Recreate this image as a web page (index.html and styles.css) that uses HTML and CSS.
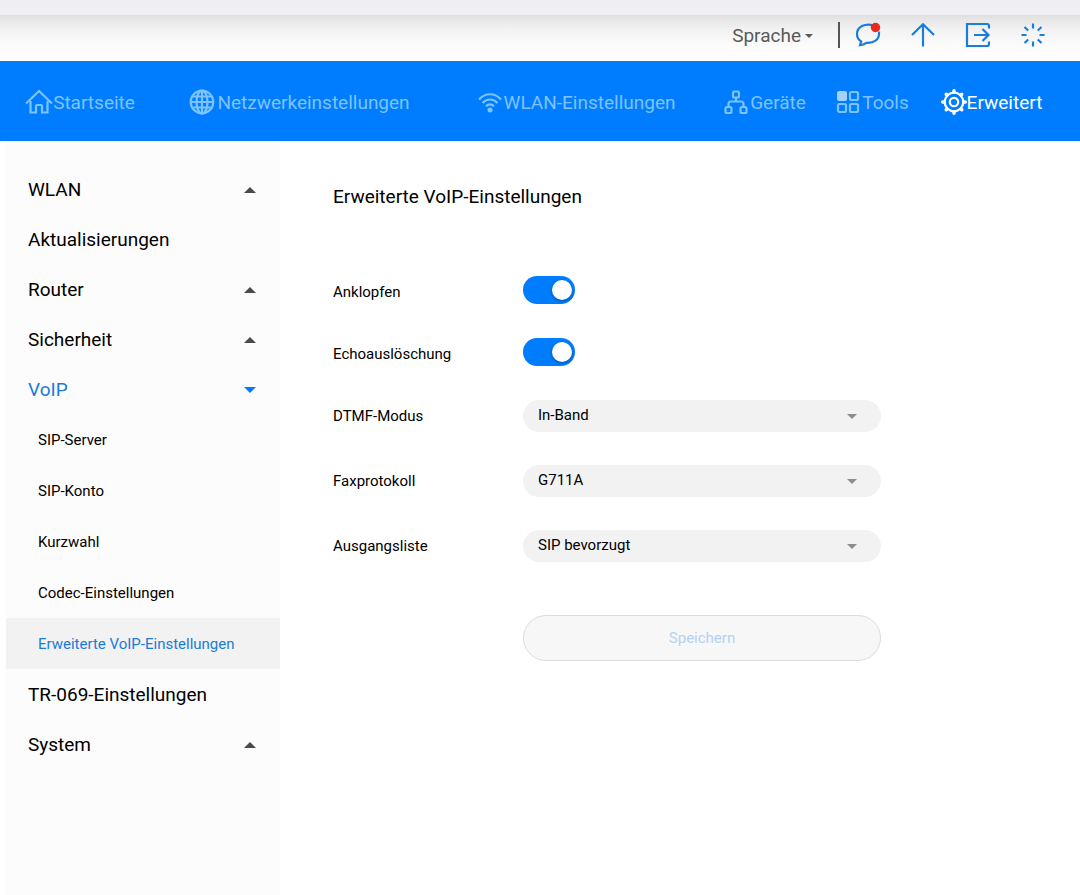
FILE: index.html
```html
<!DOCTYPE html>
<html lang="de">
<head>
    <meta charset="UTF-8">
    <meta name="viewport" content="width=device-width, initial-scale=1.0">
    <title>Erweiterte VoIP-Einstellungen</title>
    <link rel="stylesheet" href="styles.css">
</head>
<body>

    <div class="top-strip"></div>

    <header class="header">
        <button type="button" class="language">Sprache <span class="language-arrow"></span></button>
        <span class="divider"></span>
        <div class="header-icons">
            <a href="#" aria-label="Nachrichten">
                <svg width="26" height="26" viewBox="0 0 26 26">
                    <path d="M18 3.200C10 1 2 4.800 2 12c0 3.500 1.800 6 4.200 7.500L5 23.200c3-.300 4.800-1.200 6.200-2.400C19 21.500 24 17.500 24 12V9.500"/>
                    <circle class="dot" cx="20.500" cy="5.500" r="4.700"/>
                </svg>
            </a>
            <a href="#" aria-label="Update">
                <svg width="26" height="26" viewBox="0 0 26 26">
                    <path d="M13 24.500V2.500M2 13L13 2.300 24 13"/>
                </svg>
            </a>
            <a href="#" aria-label="Abmelden">
                <svg width="26" height="26" viewBox="0 0 26 26">
                    <path d="M24 6.500V4q0-2-2-2H2v22h20q2 0 2-2v-2.500M9 13h14M17.500 7l6 6-6 6"/>
                </svg>
            </a>
            <a href="#" aria-label="Assistent">
                <svg width="26" height="26" viewBox="0 0 26 26">
                    <path d="M13 1.500v5M13 19.500v5M1.500 13h5M19.500 13h5M4.500 5l3.700 3.500M17.800 17.500l3.700 3.500M4.500 21l3.700-3.500M17.800 8.500L21.500 5"/>
                </svg>
            </a>
        </div>
    </header>

    <nav class="main-nav">
        <a href="#">
            <svg width="28" height="26" viewBox="0 0 28 26">
                <path d="M1 14.500L14 2l13 12.500M5.500 12v11.500h5.500V17q0-1 1-1h4q1 0 1 1v6.500h5.500V12"/>
            </svg>Startseite
        </a>
        <a href="#">
            <svg class="wide" width="26" height="26" viewBox="0 0 26 26">
                <circle cx="13" cy="13" r="11.300"/>
                <ellipse cx="13" cy="13" rx="5.500" ry="11.300"/>
                <path d="M13 2v22M2 13h22M4 7.500h18M4 18.500h18"/>
            </svg>Netzwerkeinstellungen
        </a>
        <a href="#">
            <svg class="wide" width="24" height="26" viewBox="0 0 24 26">
                <path d="M1 10.500c6-7 16-7 22 0M4.500 14c4.300-4.700 10.700-4.700 15 0M8 17.300c2.400-2.500 5.600-2.500 8 0"/>
                <circle class="fill" cx="12" cy="21" r="2.500"/>
            </svg>WLAN-Einstellungen
        </a>
        <a href="#">
            <svg class="wide" width="24" height="26" viewBox="0 0 24 26">
                <rect x="9" y="2.500" width="6" height="6" rx="1.500"/>
                <rect x="1.500" y="18" width="6" height="6" rx="1.500"/>
                <rect x="16.500" y="18" width="6" height="6" rx="1.500"/>
                <path d="M12 8.500v4M4.500 18v-3q0-2.500 2.500-2.500h10q2.500 0 2.500 2.500v3"/>
            </svg>Geräte
        </a>
        <a href="#">
            <svg class="wide" width="24" height="26" viewBox="0 0 24 26">
                <rect class="fill bright" x="1" y="2" width="10" height="10" rx="2"/>
                <rect x="14" y="3" width="8" height="8" rx="1.500"/>
                <rect x="2" y="15" width="8" height="8" rx="1.500"/>
                <rect x="14" y="15" width="8" height="8" rx="1.500"/>
            </svg>Tools
        </a>
        <a href="#" class="active">
            <svg width="26" height="26" viewBox="0 0 26 26">
                <circle cx="13" cy="13" r="9.300"/>
                <circle cx="13" cy="13" r="4.200"/>
                <path class="teeth" d="M13 3V1.700M13 23v1.300M3 13H1.700M23 13h1.300M6 6l-.800-.800M20 6l.800-.800M6 20l-.800.800M20 20l.800.800"/>
            </svg>Erweitert
        </a>
    </nav>

    <div class="page">
        <aside class="sidebar">
            <ul class="menu">
                <li><a href="#">WLAN <span class="arrow-up"></span></a></li>
                <li><a href="#">Aktualisierungen</a></li>
                <li><a href="#">Router <span class="arrow-up"></span></a></li>
                <li><a href="#">Sicherheit <span class="arrow-up"></span></a></li>
                <li>
                    <a href="#" class="open">VoIP <span class="arrow-down"></span></a>
                    <ul class="submenu">
                        <li><a href="#">SIP-Server</a></li>
                        <li><a href="#">SIP-Konto</a></li>
                        <li><a href="#">Kurzwahl</a></li>
                        <li><a href="#">Codec-Einstellungen</a></li>
                        <li><a href="#" class="selected">Erweiterte VoIP-Einstellungen</a></li>
                    </ul>
                </li>
                <li><a href="#">TR-069-Einstellungen</a></li>
                <li><a href="#">System <span class="arrow-up"></span></a></li>
            </ul>
        </aside>

        <main class="content">
            <h1>Erweiterte VoIP-Einstellungen</h1>
            <form>
                <div class="row">
                    <label for="anklopfen">Anklopfen</label>
                    <input type="checkbox" class="switch" id="anklopfen" checked>
                </div>
                <div class="row">
                    <label for="echo">Echoauslöschung</label>
                    <input type="checkbox" class="switch" id="echo" checked>
                </div>
                <div class="row select-row">
                    <label for="dtmf">DTMF-Modus</label>
                    <div class="select-box">
                        <select id="dtmf"><option>In-Band</option></select>
                    </div>
                </div>
                <div class="row select-row">
                    <label for="fax">Faxprotokoll</label>
                    <div class="select-box">
                        <select id="fax"><option>G711A</option></select>
                    </div>
                </div>
                <div class="row select-row">
                    <label for="ausgang">Ausgangsliste</label>
                    <div class="select-box">
                        <select id="ausgang"><option>SIP bevorzugt</option></select>
                    </div>
                </div>
                <div class="row save-row">
                    <button type="submit" class="save" disabled>Speichern</button>
                </div>
            </form>
        </main>
    </div>

</body>
</html>
```
FILE: styles.css
```css
* {
    box-sizing: border-box;
}

body {
    margin: 0;
    min-height: 100vh;
    display: flex;
    flex-direction: column;
    font-family: Roboto, Arial, sans-serif;
    font-size: 15px;
    color: #000;
    background-color: #fff;
}

a {
    color: inherit;
    text-decoration: none;
}

ul {
    list-style: none;
    margin: 0;
    padding: 0;
}

svg {
    display: block;
    flex: none;
    fill: none;
    stroke: currentColor;
    stroke-width: 2.2;
}

.top-strip {
    height: 15px;
    background-color: #eeeef3;
}

/* Header */
.header {
    height: 46px;
    padding: 0 34px 6px 0;
    display: flex;
    align-items: center;
    justify-content: flex-end;
    background-image: linear-gradient(#e0e0e0, #f2f2f2 30%, #fdfdfd 75%);
}

.language {
    display: flex;
    align-items: center;
    gap: 4px;
    padding: 0;
    border: none;
    background: none;
    font-family: inherit;
    font-size: 19px;
    color: #5a5a5a;
    cursor: pointer;
}

.language-arrow {
    margin-top: 2px;
    border: 4px solid transparent;
    border-top-color: #5a5a5a;
    border-bottom: none;
}

.divider {
    width: 2px;
    height: 26px;
    margin: 0 15px 0 25px;
    background-color: #555;
}

.header-icons {
    display: flex;
    gap: 29px;
    color: #1b7ddb;
}

.header-icons .dot {
    fill: #e8291c;
    stroke: none;
}

/* Main navigation */
.main-nav {
    height: 80px;
    padding: 0 26px 0 0;
    display: grid;
    grid-template-columns: 160fr 279fr 275fr 102fr 113fr 125fr;
    background-color: #007dff;
    font-size: 19px;
    color: #7cc3ff;
}

.main-nav a {
    display: flex;
    align-items: center;
    justify-content: center;
    padding-top: 2px;
    white-space: nowrap;
}

.main-nav .wide {
    margin-right: 2px;
}

.main-nav .fill {
    fill: currentColor;
    stroke: none;
}

.main-nav .bright {
    fill: #a3d2ff;
}

.main-nav .teeth {
    stroke-width: 3.4;
    stroke-linecap: round;
}

.main-nav .active {
    color: #fff;
}

/* Sidebar */
.page {
    flex: 1;
    display: flex;
    padding-left: 6px;
}

.sidebar {
    flex: 0 0 274px;
    padding-top: 23px;
    background-color: #fcfcfc;
}

.menu a {
    height: 50px;
    padding: 0 24px 0 22px;
    display: flex;
    align-items: center;
    justify-content: space-between;
    font-size: 19px;
}

.menu .open,
.menu .selected {
    color: #1a7bd9;
}

.submenu a {
    height: 51px;
    padding-left: 32px;
    font-size: 15px;
}

.submenu .selected {
    background-color: #f2f2f2;
}

.arrow-up,
.arrow-down {
    margin-top: 2px;
    border: 6px solid transparent;
}

.arrow-up {
    border-top: none;
    border-bottom-color: #4a4a4a;
}

.arrow-down {
    border-bottom: none;
    border-top-color: #007dff;
}

/* Content */
.content {
    flex: 1;
    padding: 43px 53px 40px;
}

h1 {
    margin: 0 0 49px;
    font-size: 19px;
    font-weight: normal;
    line-height: 26px;
}

.row {
    height: 62px;
    display: grid;
    grid-template-columns: 190px minmax(0, 358px);
    align-items: center;
}

.row label {
    padding-top: 3px;
}

.select-row {
    height: 65px;
}

.select-row label {
    padding-top: 1px;
}

.switch {
    appearance: none;
    width: 52px;
    height: 28px;
    margin: 0;
    padding: 4px 3px;
    border-radius: 14px;
    background-color: #007dff;
    display: flex;
    justify-content: flex-start;
    cursor: pointer;
}

.switch:checked {
    justify-content: flex-end;
}

.switch::before {
    content: "";
    width: 20px;
    height: 20px;
    border-radius: 50%;
    background-color: #fff;
    box-shadow: 0 1px 3px rgba(0, 0, 0, 0.4);
}

.select-box {
    position: relative;
}

.select-box::after {
    content: "";
    position: absolute;
    right: 24px;
    top: 14px;
    border: 5px solid transparent;
    border-top-color: #8c8c8c;
    border-bottom: none;
    pointer-events: none;
}

select {
    appearance: none;
    display: block;
    width: 100%;
    height: 32px;
    padding: 0 15px 2px;
    border: none;
    border-radius: 16px;
    background-color: #f2f2f2;
    font-family: inherit;
    font-size: 15px;
    color: #000;
}

.save-row {
    height: auto;
    margin-top: 37px;
}

.save {
    grid-column: 2;
    height: 46px;
    border: 1px solid #dcdcdc;
    border-radius: 23px;
    background-color: #f7f7f7;
    font-family: inherit;
    font-size: 15px;
    color: #b0d3f4;
}
```
